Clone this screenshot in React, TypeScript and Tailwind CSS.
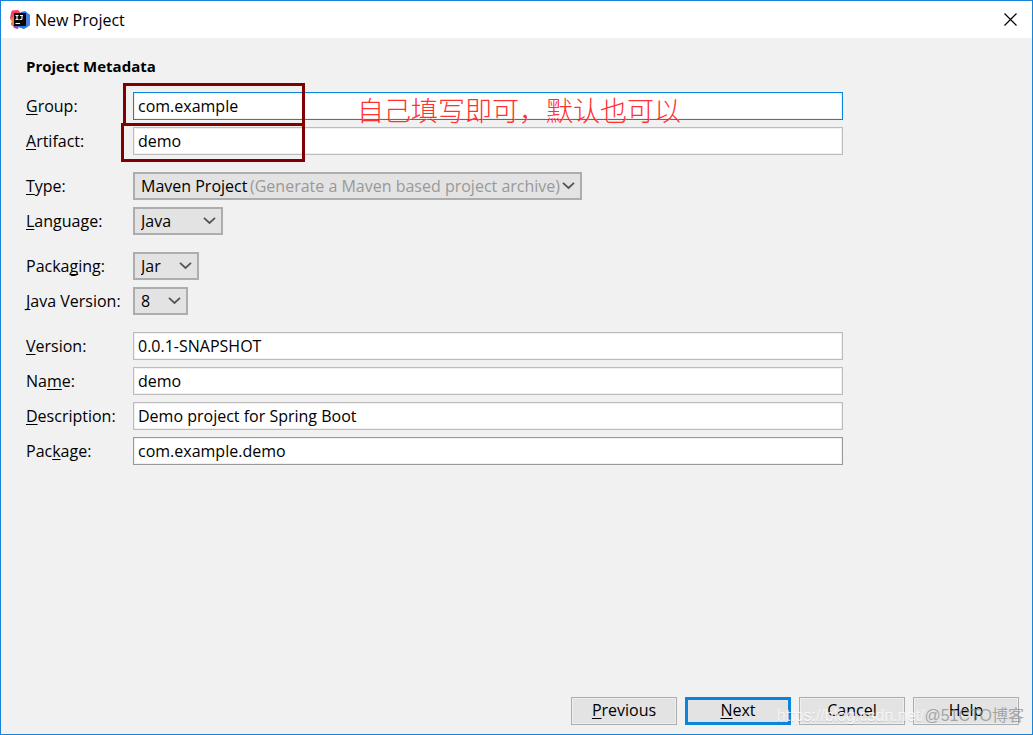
import { useId, type ReactNode } from "react";

type FieldProps = { label: string; mnemonic: number; value: string; look?: string };
type SelectProps = { label: string; mnemonic: number; value: string; width: string; hint?: string };

const plain = "border-[#bcbcbc]";
const focused = "border-[#0a84dd]";
const dark = "border-[#999999]";

function Mnemonic({ text, at }: { text: string; at: number }) {
  return (
    <>
      {text.slice(0, at)}
      <span className="underline decoration-1 underline-offset-2 [text-decoration-skip-ink:none]">{text[at]}</span>
      {text.slice(at + 1)}
    </>
  );
}

function Row({ id, label, mnemonic, children }: { id: string; label: string; mnemonic: number; children: ReactNode }) {
  return (
    <div className="flex h-7 items-center">
      <label htmlFor={id} className="w-[107px] shrink-0 whitespace-nowrap">
        <Mnemonic text={label} at={mnemonic} />
      </label>
      {children}
    </div>
  );
}

function TextField({ label, mnemonic, value, look = plain }: FieldProps) {
  const id = useId();
  return (
    <Row id={id} label={label} mnemonic={mnemonic}>
      <input
        id={id}
        type="text"
        defaultValue={value}
        className={`h-7 min-w-0 flex-1 border bg-white px-1 inset-ring inset-ring-[#f0f0f0] outline-none ${look}`}
      />
    </Row>
  );
}

function SelectField({ label, mnemonic, value, width, hint }: SelectProps) {
  const id = useId();
  return (
    <Row id={id} label={label} mnemonic={mnemonic}>
      <div className={`relative ${width}`}>
        <select
          id={id}
          defaultValue={value}
          className="block h-7 w-full appearance-none border-2 border-[#adadad] bg-[#e3e3e3] pl-1.5 outline-none"
        >
          <option>{value}</option>
        </select>
        {hint && (
          <span className="pointer-events-none absolute inset-y-0 left-[117px] flex items-center whitespace-nowrap text-[#999999]">
            {hint}
          </span>
        )}
        <svg
          className="pointer-events-none absolute top-2.5 right-[7px]"
          width="13"
          height="8"
          viewBox="0 0 13 8"
          fill="none"
          stroke="#555555"
          strokeWidth="1.8"
        >
          <path d="M1 0.8L6.5 6L12 0.8" />
        </svg>
      </div>
    </Row>
  );
}

function DialogButton({ label, mnemonic, primary }: { label: string; mnemonic?: number; primary?: boolean }) {
  return (
    <button
      type="button"
      className={`flex h-7 w-[106px] items-center justify-center bg-[#e3e3e3] pb-0.5 ${
        primary ? "border-3 border-[#0a84dd]" : "border border-[#adadad] inset-ring inset-ring-[#eeeeee]"
      }`}
    >
      <span>{mnemonic === undefined ? label : <Mnemonic text={label} at={mnemonic} />}</span>
    </button>
  );
}

function AppLogo() {
  return (
    <svg width="20" height="20" viewBox="0 0 20 20" aria-hidden="true">
      <path d="M1 3L2 0.5L8 0L11 3L9 17L6 18L1 14L2 11L0 8Z" fill="#fc3d68" />
      <path d="M0 9L4 6L6 18L1 15L2 11Z" fill="#f47b3a" />
      <path d="M3 15L9 15L8 19L4 18Z" fill="#9b46a8" />
      <path d="M11 2L15 1L20 5L20 15L14 19L8 17L10 5Z" fill="#1c7ce8" />
      <path d="M16 3L20 5V15L16 18Z" fill="#4a80e0" />
      <rect x="4" y="3" width="12" height="13" fill="#080808" />
      <path d="M5.5 5.5H8.5M7 5.5V9.5M5.5 9.5H8.5M10 5.5H13M12 5.5V8.5Q12 9.5 11 9.5H9.5" fill="none" stroke="#ffffff" strokeWidth="1.1" />
      <path d="M5.5 13.5H10" stroke="#ffffff" strokeWidth="1.1" />
    </svg>
  );
}

export default function App() {
  return (
    <div className="relative flex min-h-screen flex-col border border-[#1883d7] bg-[#f1f1f1] font-['Open_Sans','Noto_Sans_CJK_SC',sans-serif] text-[16px] leading-6 text-black">
      <header className="flex h-[37px] items-center bg-white pr-[15px] pl-[9px]">
        <AppLogo />
        <h1 className="ml-[5px] flex-1">New Project</h1>
        <button type="button" aria-label="Close">
          <svg width="13" height="13" viewBox="0 0 13 13" stroke="#000000" strokeWidth="1.2">
            <path d="M0.5 0.5L12.5 12.5M12.5 0.5L0.5 12.5" />
          </svg>
        </button>
      </header>

      <main className="flex-1 pt-4 pr-[189px] pl-[25px]">
        <h2 className="mb-3.5 text-[15px] font-bold">Project Metadata</h2>
        <form className="flex flex-col gap-[17px]">
          <div className="relative flex flex-col gap-[7px]">
            <TextField label="Group:" mnemonic={0} value="com.example" look={focused} />
            <TextField label="Artifact:" mnemonic={0} value="demo" />
            <div className="pointer-events-none absolute -top-[9px] left-[97px] h-[43px] w-[182px] border-3 border-[#800000]" />
            <div className="pointer-events-none absolute top-[31px] left-[95px] h-[39px] w-[184px] border-3 border-[#800000]" />
            <p className="pointer-events-none absolute top-0 left-[331px] font-['Noto_Sans_CJK_SC',sans-serif] text-[27px] leading-9 font-light whitespace-nowrap text-[#ff3030]">
              自己填写即可，默认也可以
            </p>
          </div>
          <div className="flex flex-col gap-[7px]">
            <SelectField
              label="Type:"
              mnemonic={0}
              value="Maven Project"
              hint="(Generate a Maven based project archive)"
              width="w-[449px]"
            />
            <SelectField label="Language:" mnemonic={0} value="Java" width="w-[90px]" />
          </div>
          <div className="flex flex-col gap-[7px]">
            <SelectField label="Packaging:" mnemonic={5} value="Jar" width="w-[66px]" />
            <SelectField label="Java Version:" mnemonic={0} value="8" width="w-[55px]" />
          </div>
          <div className="flex flex-col gap-[7px]">
            <TextField label="Version:" mnemonic={0} value="0.0.1-SNAPSHOT" />
            <TextField label="Name:" mnemonic={2} value="demo" />
            <TextField label="Description:" mnemonic={0} value="Demo project for Spring Boot" />
            <TextField label="Package:" mnemonic={3} value="com.example.demo" look={dark} />
          </div>
        </form>
      </main>

      <footer className="flex justify-end gap-2 pr-[13px] pb-[9px]">
        <DialogButton label="Previous" mnemonic={0} />
        <DialogButton label="Next" mnemonic={0} primary />
        <DialogButton label="Cancel" />
        <DialogButton label="Help" />
      </footer>

      <div className="pointer-events-none absolute right-2 bottom-1.5 flex items-center font-['Liberation_Sans','Noto_Sans_CJK_SC',sans-serif] text-[16px] whitespace-nowrap">
        <span className="text-white/80 text-shadow-2xs">https://blog.csdn.net/</span>
        <span className="text-[#888888]/70">@51CTO博客</span>
      </div>
    </div>
  );
}
